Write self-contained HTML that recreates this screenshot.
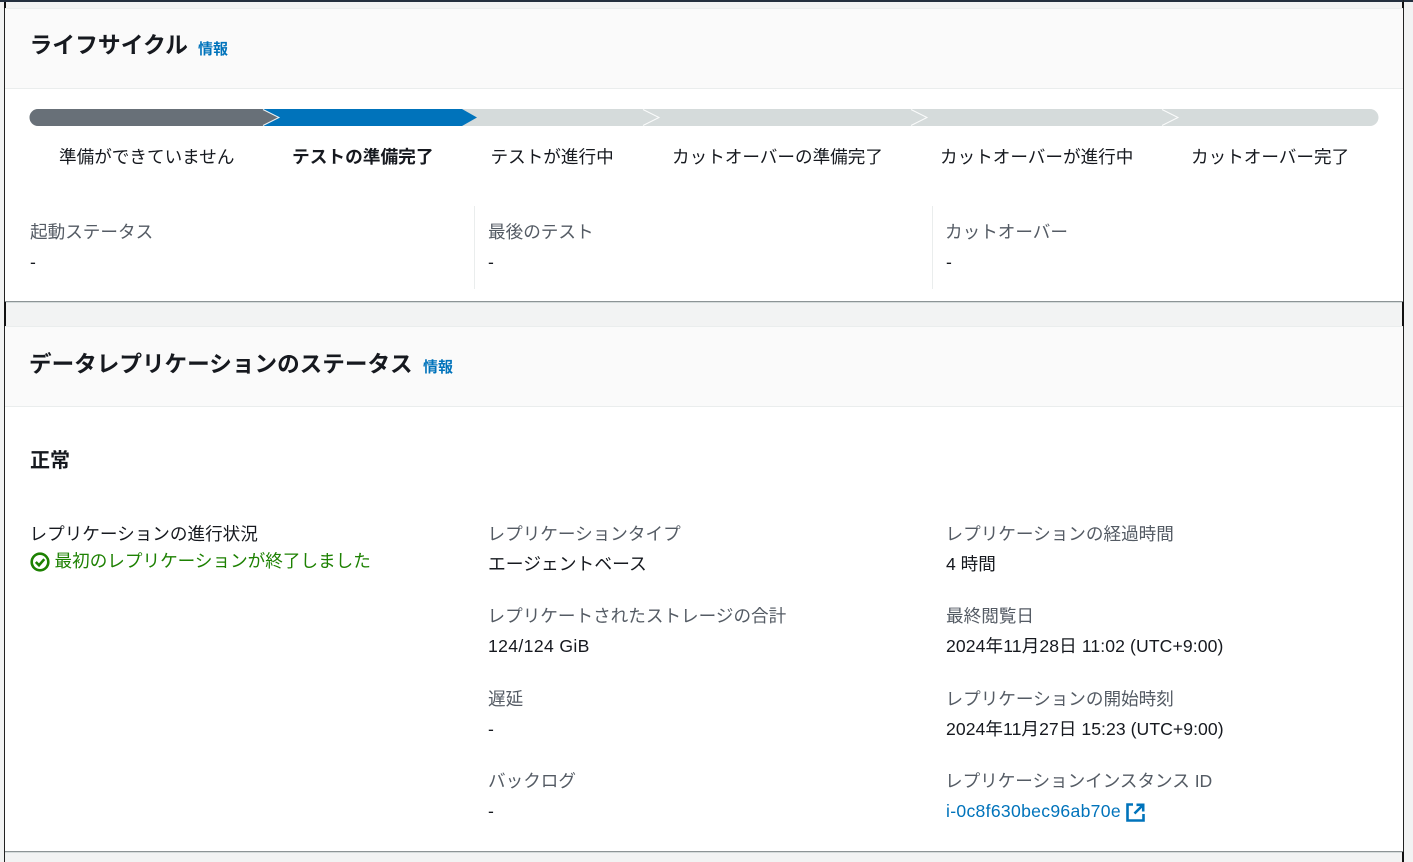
<!DOCTYPE html>
<html lang="ja"><head><meta charset="utf-8"><title>ライフサイクル</title>
<style>
html,body{margin:0;padding:0;width:1413px;height:862px;overflow:hidden;background:#f2f3f3}
body{position:relative;font-family:"Liberation Sans","Noto Sans CJK JP",sans-serif;color:#16191f;font-size:17.6px;line-height:24px}
.b{position:absolute}
.t{position:absolute;white-space:nowrap}
.g{color:#545b64}
.h{font-weight:700;font-size:22.6px;line-height:30px}
.i{font-weight:700;font-size:15px;color:#0073bb;line-height:20px}
</style></head><body>
<div class="b" style="left:0;top:0;width:1413px;height:2px;background:#232f3e"></div>
<div class="b" style="left:5px;top:8px;width:1398px;height:293px;background:#fff"></div>
<div class="b" style="left:5px;top:8px;width:1398px;height:81px;background:#fafafa;border-bottom:1px solid #eaeded;border-top:1px solid #eaeded;box-sizing:border-box"></div>
<div class="b" style="left:5px;top:301px;width:1398px;height:1px;background:#8d9496"></div>
<div class="b" style="left:5px;top:302px;width:1398px;height:1px;background:#d5dbdb"></div>
<div class="b" style="left:5px;top:326px;width:1398px;height:525px;background:#fff"></div>
<div class="b" style="left:5px;top:326px;width:1398px;height:81px;background:#fafafa;border-bottom:1px solid #eaeded;border-top:1px solid #eaeded;box-sizing:border-box"></div>
<div class="b" style="left:5px;top:851px;width:1398px;height:1px;background:#8d9496"></div>
<div class="b" style="left:5px;top:852px;width:1398px;height:1px;background:#d5dbdb"></div>
<div class="b" style="left:4px;top:2px;width:1px;height:860px;background:#222"></div>
<div class="b" style="left:4px;top:2px;width:2px;height:6px;background:#111"></div>
<div class="b" style="left:4px;top:302px;width:2px;height:24px;background:#111"></div>
<div class="b" style="left:1403px;top:0;width:1px;height:862px;background:#222"></div>
<div class="b" style="left:1402px;top:2px;width:2px;height:6px;background:#111"></div>
<div class="b" style="left:1402px;top:302px;width:2px;height:24px;background:#111"></div>
<div class="b" style="left:1402px;top:852px;width:2px;height:10px;background:#111"></div>

<svg class="b" style="left:0;top:0" width="1413" height="140" viewBox="0 0 1413 140">
<path d="M38 109H1370a8.500 8.500 0 0 1 0 17H38a8.500 8.500 0 0 1 0-17Z" fill="#d5dbdb"/>
<path d="M38 109H263L279 117.500L263 126H38a8.500 8.500 0 0 1 0-17Z" fill="#687078"/>
<path d="M263 109H462L477 117.500L462 126H263L279 117.500Z" fill="#0073bb"/>
<g fill="none" stroke="#fff" stroke-width="1" opacity=".9">
<path d="M263 109.500L279 117.500L263 125.500"/>
<path d="M643 109.500L659 117.500L643 125.500"/>
<path d="M911 109.500L927 117.500L911 125.500"/>
<path d="M1162 109.500L1178 117.500L1162 125.500"/>
</g>
</svg>

<div class="t h" style="left:29.500px;top:30px;font-size:22.800px">ライフサイクル</div>
<div class="t i" style="left:198px;top:40px">情報</div>

<div class="t" style="left:59px;top:145px">準備ができていません</div>
<div class="t" style="left:292px;top:145px;font-weight:700;font-size:17.700px">テストの準備完了</div>
<div class="t" style="left:490.500px;top:145px">テストが進行中</div>
<div class="t" style="left:672px;top:145px">カットオーバーの準備完了</div>
<div class="t" style="left:940px;top:145px">カットオーバーが進行中</div>
<div class="t" style="left:1191px;top:145px">カットオーバー完了</div>

<div class="t g" style="left:30px;top:220px">起動ステータス</div>
<div class="t" style="left:30px;top:250px">-</div>
<div class="b" style="left:474px;top:206px;width:1px;height:83px;background:#eaeded"></div>
<div class="t g" style="left:488px;top:220px">最後のテスト</div>
<div class="t" style="left:488px;top:250px">-</div>
<div class="b" style="left:932px;top:206px;width:1px;height:83px;background:#eaeded"></div>
<div class="t g" style="left:945px;top:220px">カットオーバー</div>
<div class="t" style="left:946px;top:250px">-</div>

<div class="t h" style="left:29px;top:350px">データレプリケーションのステータス</div>
<div class="t i" style="left:423px;top:358px">情報</div>

<div class="t" style="left:30px;top:449px;font-weight:700;font-size:20px">正常</div>

<div class="t" style="left:29.500px;top:522px">レプリケーションの進行状況</div>
<svg class="b" style="left:30px;top:552px" width="20" height="20" viewBox="0 0 20 20" fill="none" stroke="#1d8102" stroke-width="2.600">
<circle cx="10" cy="10" r="8.300"/><path d="M5.800 10L9 13.200L14.300 7.200"/>
</svg>
<div class="t" style="left:54.500px;top:549px;color:#1d8102">最初のレプリケーションが終了しました</div>

<div class="t g" style="left:487.500px;top:522px">レプリケーションタイプ</div>
<div class="t" style="left:488px;top:552px;font-size:17.800px">エージェントベース</div>
<div class="t g" style="left:487.500px;top:604px">レプリケートされたストレージの合計</div>
<div class="t" style="left:488px;top:634px;letter-spacing:.36px">124/124 GiB</div>
<div class="t g" style="left:488px;top:687px">遅延</div>
<div class="t" style="left:488px;top:717px">-</div>
<div class="t g" style="left:488px;top:769px">バックログ</div>
<div class="t" style="left:488px;top:799px">-</div>

<div class="t g" style="left:945.500px;top:522px">レプリケーションの経過時間</div>
<div class="t" style="left:946px;top:552px">4 時間</div>
<div class="t g" style="left:946px;top:604px">最終閲覧日</div>
<div class="t" style="left:946px;top:634px;letter-spacing:.1px">2024年11月28日 11:02 (UTC+9:00)</div>
<div class="t g" style="left:945.500px;top:687px">レプリケーションの開始時刻</div>
<div class="t" style="left:946px;top:717px;letter-spacing:.06px">2024年11月27日 15:23 (UTC+9:00)</div>
<div class="t g" style="left:945px;top:769px;letter-spacing:-.03px">レプリケーションインスタンス ID</div>
<div class="t" style="left:946px;top:799px;color:#0073bb;letter-spacing:.3px">i-0c8f630bec96ab70e</div>
<svg class="b" style="left:1126px;top:803px" width="19" height="19" viewBox="0 0 19 19" fill="none" stroke="#0073bb" stroke-width="2.600">
<path d="M7 1.500H1.500V17.500H17.500V11"/><path d="M10.500 1.800H17.200V8.500M17 2L8.500 10.500"/>
</svg>
</body></html>
